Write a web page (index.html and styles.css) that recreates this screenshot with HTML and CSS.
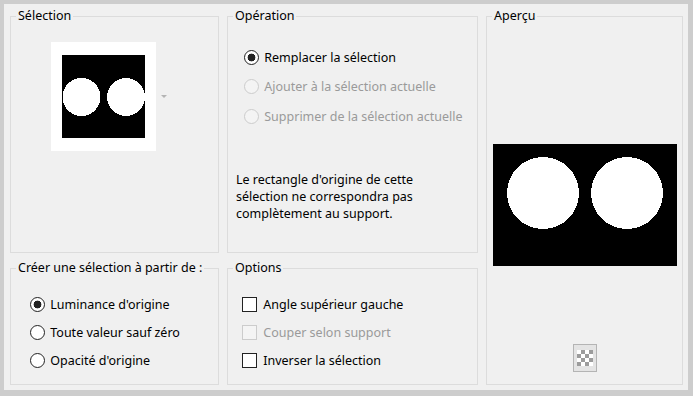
FILE: index.html
```html
<!DOCTYPE html>
<html>
<head>
    <title>Créer une sélection à partir d'un masque</title>
    <meta name="viewport" content="width=device-width, initial-scale=1.0">
    <link rel="stylesheet" href="styles.css">
</head>
<body>
    <div class="dialog">
        <!-- source thumbnail -->
        <fieldset class="group group-source">
            <legend>Sélection</legend>
            <div class="source-row">
                <div class="thumb">
                    <svg width="83" height="83" viewBox="0 0 83 83" shape-rendering="crispEdges">
                        <rect width="83" height="83" fill="#000"/>
                        <circle cx="19.5" cy="42" r="19" fill="#fff"/>
                        <circle cx="64" cy="42" r="19" fill="#fff"/>
                    </svg>
                </div>
                <span class="drop-arrow"></span>
            </div>
        </fieldset>

        <!-- operation choices -->
        <fieldset class="group group-operation">
            <legend>Opération</legend>
            <div class="group-body">
                <label class="choice"><input type="radio" name="op" checked> Remplacer la sélection</label>
                <label class="choice disabled"><input type="radio" name="op" disabled> Ajouter à la sélection actuelle</label>
                <label class="choice disabled"><input type="radio" name="op" disabled> Supprimer de la sélection actuelle</label>
                <p class="note">Le rectangle d'origine de cette<br>sélection ne correspondra pas<br>complètement au support.</p>
            </div>
        </fieldset>

        <!-- preview -->
        <fieldset class="group group-preview">
            <legend>Aperçu</legend>
            <div class="preview">
                <svg width="184" height="122" viewBox="0 0 184 122" shape-rendering="crispEdges">
                    <rect width="184" height="122" fill="#000"/>
                    <circle cx="50" cy="49" r="36" fill="#fff"/>
                    <circle cx="134" cy="49" r="36" fill="#fff"/>
                </svg>
            </div>
            <button class="checker-btn" type="button"><span class="checker"></span></button>
        </fieldset>

        <!-- source type -->
        <fieldset class="group group-from">
            <legend>Créer une sélection à partir de :</legend>
            <div class="group-body">
                <label class="choice"><input type="radio" name="from" checked> Luminance d'origine</label>
                <label class="choice"><input type="radio" name="from"> Toute valeur sauf zéro</label>
                <label class="choice"><input type="radio" name="from"> Opacité d'origine</label>
            </div>
        </fieldset>

        <!-- options -->
        <fieldset class="group group-options">
            <legend>Options</legend>
            <div class="group-body">
                <label class="choice"><input type="checkbox"> Angle supérieur gauche</label>
                <label class="choice disabled"><input type="checkbox" disabled> Couper selon support</label>
                <label class="choice"><input type="checkbox"> Inverser la sélection</label>
            </div>
        </fieldset>
    </div>
</body>
</html>
```

FILE: styles.css
```css
body {
    margin: 0;
    background-color: #cdcdcd;
    font-family: "Noto Sans", "Open Sans", sans-serif;
    font-size: 12.5px;
    color: #000;
}

/* Main dialog panel */
.dialog {
    display: grid;
    grid-template-columns: 209px 251px 197px;
    grid-template-rows: 245px 125px;
    column-gap: 8px;
    row-gap: 7px;
    margin: 4px 5px 6px 4px;
    padding: 4px 6px 6px 6px;
    height: 376px;
    background-color: #f0f0f0;
}

/* Group boxes */
.group {
    margin: 0;
    padding: 0;
    border: 1px solid #dcdcdc;
    min-width: 0;
}

.group legend {
    margin-left: 5px;
    padding: 0 2px;
    line-height: 16px;
}

.group-source {
    grid-column: 1;
    grid-row: 1;
}

.group-operation {
    grid-column: 2;
    grid-row: 1;
}

.group-preview {
    grid-column: 3;
    grid-row: 1 / span 2;
    display: flex;
    flex-direction: column;
    align-items: center;
}

.group-from {
    grid-column: 1;
    grid-row: 2;
}

.group-options {
    grid-column: 2;
    grid-row: 2;
}

.group-operation .group-body {
    padding: 24px 0 0 16px;
}

.group-from .group-body {
    padding: 19px 0 0 19px;
}

.group-options .group-body {
    padding: 19px 0 0 14px;
}

/* Source thumbnail */
.source-row {
    display: flex;
    align-items: center;
    padding: 18px 0 0 40px;
}

.thumb {
    background-color: #fff;
    padding: 13px 11px;
    line-height: 0;
}

.drop-arrow {
    width: 0;
    height: 0;
    margin-left: 5px;
    border-left: 3px solid transparent;
    border-right: 3px solid transparent;
    border-top: 3px solid #b4b4b4;
}

/* Radio and checkbox rows */
.choice {
    display: flex;
    align-items: center;
    height: 18px;
    margin-bottom: 10px;
    white-space: pre;
}

.group-operation .choice {
    margin-bottom: 11.5px;
}

.choice.disabled {
    color: #9a9a9a;
}

.choice input {
    appearance: none;
    margin: 0 2px 0 0;
    width: 15px;
    height: 15px;
    border: 1px solid #222;
    background-color: #fff;
}

.choice input[type="radio"] {
    border-radius: 50%;
}

.choice input[type="radio"]:checked {
    background: radial-gradient(circle, #222 0, #222 3.6px, #fff 4.2px);
}

.choice input[type="checkbox"] {
    margin-right: 3px;
}

.choice input:disabled {
    border-color: #cccccc;
    background-color: #f4f4f4;
}

/* Info note */
.note {
    margin: 46px 0 0 -8px;
    line-height: 17px;
}

/* Preview area */
.preview {
    margin-top: 120px;
    line-height: 0;
}

.checker-btn {
    margin-top: 78px;
    width: 24px;
    height: 28px;
    padding: 0;
    border: 1px solid #b4b4b4;
    background-color: #e4e4e4;
    display: flex;
    align-items: center;
    justify-content: center;
}

.checker {
    width: 16px;
    height: 16px;
    background-color: #fff;
    background-image:
        linear-gradient(45deg, #9c9c9c 25%, transparent 25%, transparent 75%, #9c9c9c 75%),
        linear-gradient(45deg, #9c9c9c 25%, transparent 25%, transparent 75%, #9c9c9c 75%);
    background-size: 8px 8px;
    background-position: 0 0, 4px 4px;
}
```
